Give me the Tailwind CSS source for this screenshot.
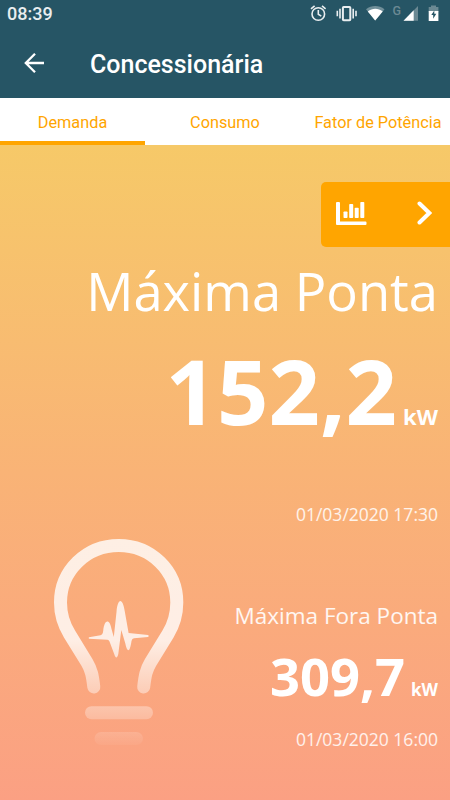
<!DOCTYPE html>
<html lang="pt-BR">
<head>
<meta charset="utf-8">
<meta name="viewport" content="width=device-width, initial-scale=1">
<title>Concessionária</title>
<script src="https://cdn.jsdelivr.net/npm/@tailwindcss/browser@4"></script>
</head>
<body class="w-[450px] h-[800px] overflow-hidden flex flex-col font-[Roboto,sans-serif]">
<header class="h-[98px] shrink-0 bg-[#265565] text-white">
  <div class="h-7 flex items-center justify-between pl-[7px] pr-[10px]">
    <span class="text-[18px] leading-7 font-medium text-[#e9eef0]">08:39</span>
    <svg class="w-[132px] h-7 shrink-0" viewBox="308 0 132 28" fill="none">
      <g stroke="#e9eef0" stroke-width="1.6">
        <circle cx="318.3" cy="14" r="6.3"/>
        <path d="M318.3 10v4.3l3 1.8M311 8.8l3.6-3M325.6 8.8l-3.6-3"/>
        <rect x="342.9" y="7" width="7.4" height="13.3" rx=".8" stroke-width="2"/>
        <path d="M340 8.7v9.8M353.2 8.7v9.8M337.3 10.7v5.6M356 10.7v5.6" stroke-width="1.6"/>
      </g>
      <path d="M366 9.3C371.5 5 379 5 384.5 9.3L375.2 20.5Z" fill="#708f99"/>
      <path d="M367.8 11.4C372.5 8 378 8 382.7 11.4L375.2 20.5Z" fill="#fff"/>
      <text x="392.6" y="15.2" font-family="Roboto, sans-serif" font-size="12.5" font-weight="500" fill="#6b8993">G</text>
      <path d="M418 6v14.7h-14.5Z" fill="#6b8993"/>
      <path d="M413.7 10.3v10.4h-10.2Z" fill="#fff"/>
      <path d="M431 5.5h5V7h2.4v5h-9.7V7H431Z" fill="#6b8993"/>
      <path d="M428.7 11h9.7v10h-9.7Z" fill="#fff"/>
      <path d="M434.300 10.500l-3 4.500h1.900v3.800l3.100-5h-2Z" fill="#265565"/>
    </svg>
  </div>
  <div class="h-[70px] flex items-center pl-6">
    <svg class="w-[21px] h-5 shrink-0" viewBox="0 0 21 20" fill="none" stroke="#fff" stroke-width="2.3"><path d="M20 10H1.8M11 .8L1.8 10l9.2 9.2"/></svg>
    <h1 class="ml-[45px] text-[25px] leading-8 font-medium whitespace-nowrap pt-[3px]">Concessionária</h1>
  </div>
</header>
<nav class="h-[47px] shrink-0 flex bg-white text-[#ffa500] text-[16.3px] leading-[50px] text-center whitespace-nowrap">
  <div class="w-[145px] border-b-4 border-[#ffa500]">Demanda</div>
  <div class="w-[160px]">Consumo</div>
  <div class="w-[145px] pl-[1px]">Fator de Potência</div>
</nav>
<main class="relative grow flex flex-col items-end bg-linear-to-b from-[#f6c968] via-[#f9b376] to-[#fba083] pt-[37px] text-white font-['Open_Sans',sans-serif] whitespace-nowrap">
  <svg class="absolute left-[50px] top-[385px] w-[140px] h-[225px]" viewBox="50 530 140 225" fill="none">
    <defs>
      <linearGradient id="fade" gradientUnits="userSpaceOnUse" x1="0" y1="530" x2="0" y2="750">
        <stop offset="0" stop-color="#fff" stop-opacity=".8"/>
        <stop offset=".5" stop-color="#fff" stop-opacity=".8"/>
        <stop offset=".83" stop-color="#fff" stop-opacity=".3"/>
        <stop offset="1" stop-color="#fff" stop-opacity="0"/>
      </linearGradient>
    </defs>
    <path d="M93.8 687C92.5 676 91.5 670 87 662.5L69.5 634C64 625 60.5 614 60.5 602.5C60.5 570.5 86.5 545.5 118.7 545.5S176.8 570.5 176.8 602.5C176.8 614 173.500 625 168 634L150.500 662.5C146 670 145 676 143.700 687" stroke="url(#fade)" stroke-width="13" stroke-linecap="round"/>
    <path d="M89 637.200L100.500 635.200Q102.700 634.800 103.200 631C104.300 619 109.700 618.500 111.500 629L113.800 637L116.500 612C117.800 597 122.800 598 124.700 611L128.600 633L148 635Q149.800 636 148 637L134 638.300Q132 638.500 131.500 641C129.800 653 127.300 653 125.200 643L121.300 630L118.300 654C117.300 658.500 115.500 658.500 114.200 654L109.500 641.500Q108.800 639.800 107.500 639.800L89 638.800Q88.300 638 89 637.200Z" fill="url(#fade)"/>
    <rect x="85" y="706.200" width="68" height="13" rx="6.500" fill="url(#fade)"/>
    <rect x="94.500" y="732" width="48.500" height="13" rx="6.500" fill="url(#fade)"/>
  </svg>
  <button class="w-[129.5px] h-[65px] rounded-l-[5px] bg-[#ffa500] flex items-center justify-between pl-[15px] pr-[18px] shrink-0">
    <svg class="w-[31px] h-[23px] mt-[-3px]" viewBox="0 0 31 23" fill="#fff"><path d="M1 0h2a1 1 0 0 1 1 1v18.500h25.500a1 1 0 0 1 1 1V22a1 1 0 0 1-1 1H1a1 1 0 0 1-1-1V1a1 1 0 0 1 1-1Z"/><rect x="7.500" y="9.500" width="4" height="6.500" rx=".8"/><rect x="13.200" y="2" width="4" height="14" rx=".8"/><rect x="18.700" y="5.800" width="4" height="10.200" rx=".8"/><rect x="24.300" y="0" width="4" height="16" rx=".8"/></svg>
    <svg class="w-[15px] h-6 mt-[-4px]" viewBox="0 0 15 24" fill="none" stroke="#fff" stroke-width="4" stroke-linecap="round"><path d="M2.500 2.500L12.300 12L2.500 21.500"/></svg>
  </button>
  <section class="relative flex flex-col items-end pr-3 mt-[14px]">
    <h2 class="text-[52.5px] leading-[60px] font-normal">Máxima Ponta</h2>
    <p class="mt-[19px] h-[100px] flex items-baseline gap-[6px] leading-[100px] font-bold"><span class="text-[90px]">152,2</span><span class="text-[22px]">kW</span></p>
    <time class="mt-[62px] text-[17.5px] leading-6 text-white/85">01/03/2020 17:30</time>
  </section>
  <section class="relative flex flex-col items-end pr-3 mt-[74px]">
    <h3 class="text-[22.5px] leading-8 text-white/90">Máxima Fora Ponta</h3>
    <p class="mt-[14px] h-[60px] flex items-baseline gap-[6px] leading-[60px] font-bold"><span class="text-[52.5px]">309,7</span><span class="text-[17px]">kW</span></p>
    <time class="mt-[21px] text-[17.5px] leading-6 text-white/85">01/03/2020 16:00</time>
  </section>
</main>
</body>
</html>
